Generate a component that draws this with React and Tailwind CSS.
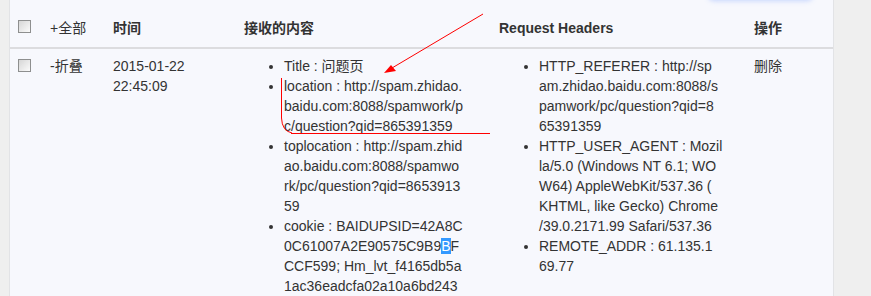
const contentItems = [
  ["Title : 问题页"],
  ["location : http://spam.zhidao.", "baidu.com:8088/spamwork/p", "c/question?qid=865391359"],
  ["toplocation : http://spam.zhid", "ao.baidu.com:8088/spamwo", "rk/pc/question?qid=8653913", "59"],
];

const headerItems = [
  ["HTTP_REFERER : http://sp", "am.zhidao.baidu.com:8088/s", "pamwork/pc/question?qid=8", "65391359"],
  [
    "HTTP_USER_AGENT : Mozil",
    "la/5.0 (Windows NT 6.1; WO",
    "W64) AppleWebKit/537.36 (",
    "KHTML, like Gecko) Chrome",
    "/39.0.2171.99 Safari/537.36",
  ],
  ["REMOTE_ADDR : 61.135.1", "69.77"],
];

function Checkbox() {
  return (
    <span className="block w-[13px] h-[13px] border border-[#8e8f8f] bg-gradient-to-br from-[#d6d6d6] to-[#fbfbfb]" />
  );
}

// lines are kept as shown (the original wraps long strings mid-word)
function Lines({ lines }) {
  return lines.map((l, i) => (
    <span key={i} className="block whitespace-nowrap">
      {l}
    </span>
  ));
}

export default function App() {
  return (
    <div
      className="relative w-[871px] h-[296px] overflow-hidden bg-[#efefef] text-[14px] leading-5 text-[#333]"
      style={{ fontFamily: '"Liberation Sans", Arial, "Noto Sans CJK SC", sans-serif' }}
    >
      <div className="absolute left-[9px] top-0 w-[825px] h-[296px] border-x border-[#e2e3e6] bg-[#f7f8fd]">
        <div className="absolute left-[698px] top-[-40px] w-[105px] h-[40px] rounded-md bg-[#f7f8fd] shadow-[0_1px_5px_rgba(110,150,255,0.35)]" />
        <table className="border-collapse table-fixed w-[823px]">
          <colgroup>
            <col className="w-[40px]" />
            <col className="w-[63px]" />
            <col className="w-[131px]" />
            <col className="w-[255px]" />
            <col className="w-[255px]" />
            <col className="w-[79px]" />
          </colgroup>
          <thead>
            <tr className="border-b-2 border-[#dcdcdf] h-[48px] align-top text-left">
              <th className="pl-2 pt-[20px] font-normal">
                <Checkbox />
              </th>
              <th className="pt-[18px] font-normal">+全部</th>
              <th className="pt-[18px] font-bold">时间</th>
              <th className="pt-[18px] font-bold">接收的内容</th>
              <th className="pt-[18px] font-bold">Request Headers</th>
              <th className="pt-[18px] font-bold">操作</th>
            </tr>
          </thead>
          <tbody>
            <tr className="align-top">
              <td className="pl-2 pt-[10px]">
                <Checkbox />
              </td>
              <td className="pt-[7px]">-折叠</td>
              <td className="pt-[7px] pr-2">
                2015-01-22
                <br />
                22:45:09
              </td>
              <td className="pt-[7px]">
                <ul className="list-disc pl-10">
                  {contentItems.map((lines) => (
                    <li key={lines[0]}>
                      <Lines lines={lines} />
                    </li>
                  ))}
                  <li>
                    <span className="block whitespace-nowrap">cookie : BAIDUPSID=42A8C</span>
                    <span className="block whitespace-nowrap">
                      0C61007A2E90575C9B9
                      <span className="bg-[#3399ff] text-white">B</span>F
                    </span>
                    <span className="block whitespace-nowrap">CCF599; Hm_lvt_f4165db5a</span>
                    <span className="block whitespace-nowrap">1ac36eadcfa02a10a6bd243</span>
                  </li>
                </ul>
              </td>
              <td className="pt-[7px]">
                <ul className="list-disc pl-10">
                  {headerItems.map((lines) => (
                    <li key={lines[0]}>
                      <Lines lines={lines} />
                    </li>
                  ))}
                </ul>
              </td>
              <td className="pt-[7px]">删除</td>
            </tr>
          </tbody>
        </table>
      </div>

      {/* red annotation drawn over the screenshot */}
      <svg className="absolute left-0 top-0 pointer-events-none" width="871" height="296">
        <line x1="483" y1="14" x2="392" y2="68" stroke="#ff0000" strokeWidth="1" />
        <polygon points="384,73 391,65 396,71" fill="#ff0000" />
        <path d="M281.5 78 L281.5 118 Q282 131 292 133" fill="none" stroke="#ff0000" strokeWidth="1" />
        <rect x="291" y="133" width="199" height="1" fill="#ff0000" />
      </svg>
    </div>
  );
}
